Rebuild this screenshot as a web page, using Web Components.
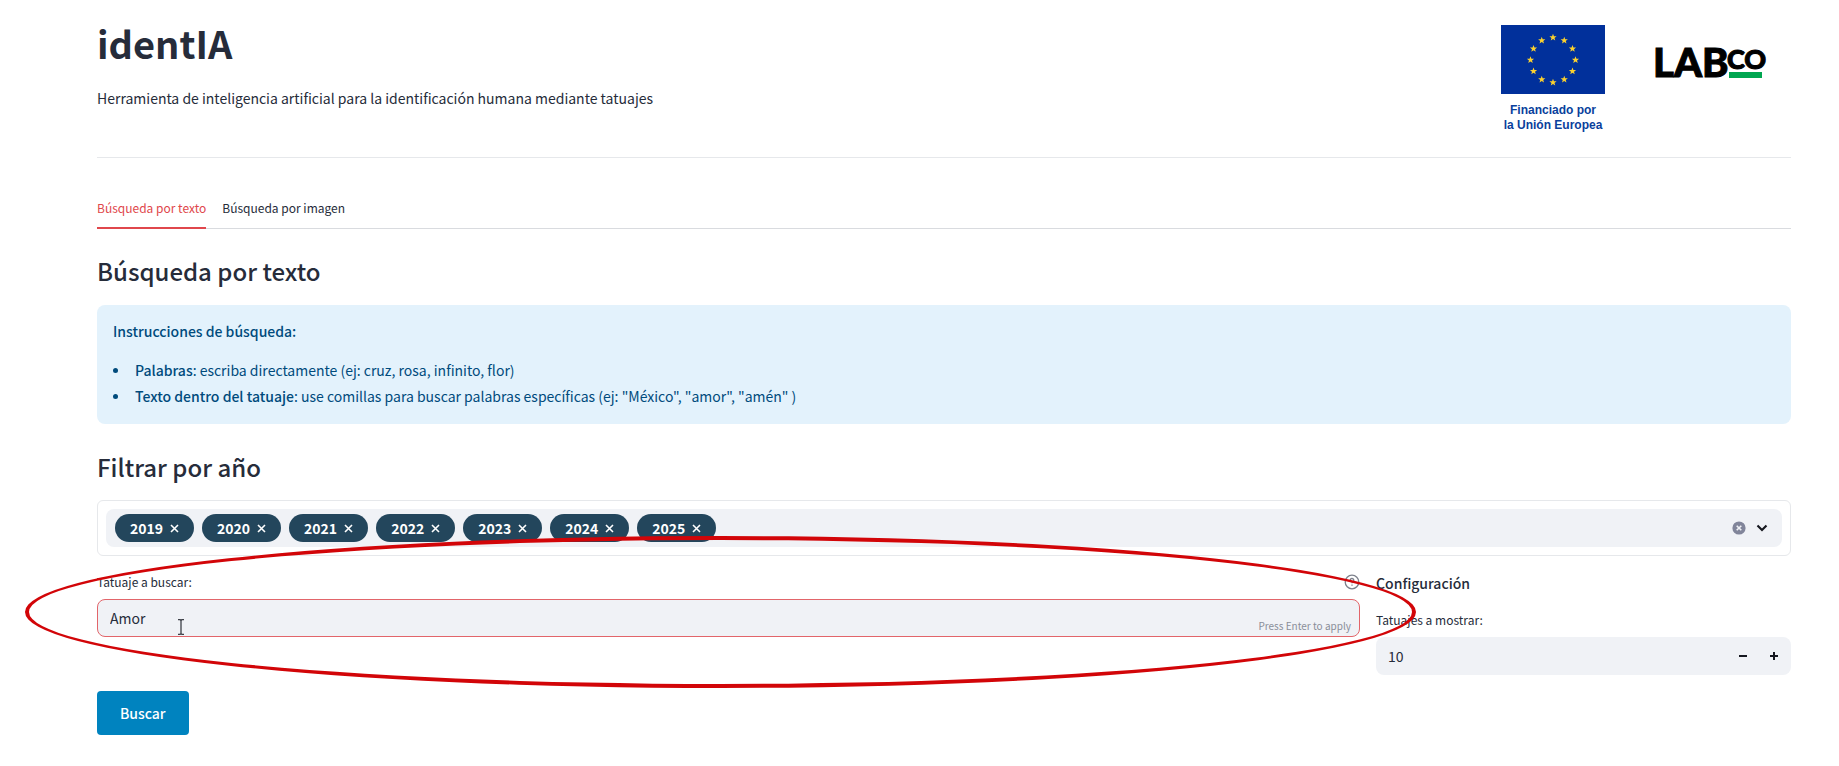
<!DOCTYPE html>
<html lang="es">
<head>
<meta charset="utf-8">
<title>identIA</title>
<style>
  html { background: #fff; }
  body {
    margin: 0;
    color: #262c3a;
    font: 14px/26px "Noto Sans CJK SC", "Noto Sans", sans-serif;
    --surface: #f0f2f6;
    --line: #e6e8eb;
    --accent: #e0474c;
    --chip: #23465c;
    --info-bg: #e3f2fc;
    --info-ink: #004b7c;
    --primary: #0083bf;
  }
</style>
</head>
<body>
<identia-app></identia-app>

<script>
const define = (name, html, setup) => {
  const template = document.createElement('template');
  template.innerHTML = `<style>
    :host { display: block; }
    *, *::before, *::after { box-sizing: border-box; }
    button, input { font: inherit; color: inherit; margin: 0; }
    button { border: 0; background: none; padding: 0; cursor: pointer; }
    svg { display: block; }
  </style>` + html;
  customElements.define(name, class extends HTMLElement {
    constructor() {
      super();
      this.attachShadow({ mode: 'open' }).append(template.content.cloneNode(true));
    }
    connectedCallback() { if (setup) setup(this, this.shadowRoot); }
  });
};

define('eu-emblem', `
  <style>
    :host { width: 104px; color: #0a3f9c; font: bold 12px/15px "Liberation Sans", sans-serif; text-align: center; white-space: nowrap; }
    svg { margin-bottom: 9px; }
    div { display: flex; flex-direction: column; align-items: center; }
  </style>
  <svg width="104" height="69" viewBox="0 0 104 69" aria-hidden="true">
    <rect width="104" height="69" fill="#01309b"/>
    <g id="stars" fill="#fbd12e"></g>
  </svg>
  <div><span>Financiado por</span><span>la Unión Europea</span></div>
`, (host, root) => {
  const group = root.getElementById('stars');
  group.innerHTML = Array.from({ length: 12 }, (_, i) => {
    const a = i * Math.PI / 6, cx = 52 + 22.5 * Math.sin(a), cy = 35 - 22.5 * Math.cos(a);
    const points = Array.from({ length: 10 }, (_, k) => {
      const r = k % 2 ? 1.6 : 3.8, b = k * Math.PI / 5;
      return (cx + r * Math.sin(b)).toFixed(2) + ',' + (cy - r * Math.cos(b)).toFixed(2);
    });
    return `<polygon points="${points.join(' ')}"/>`;
  }).join('');
});

define('labco-logo', `
  <style>
    text { font-family: Lato, Inter, sans-serif; font-weight: 900; fill: #000; stroke: #000; stroke-width: 1; }
  </style>
  <svg width="120" height="56" viewBox="0 -14 120 56" role="img" aria-label="LABCO">
    <text x="0" y="30" font-size="40">LAB</text>
    <text x="74" y="22" font-size="27">CO</text>
    <rect x="76" y="25" width="33" height="6" fill="#00a650"/>
  </svg>
`);

define('page-header', `
  <style>
    :host { padding-bottom: 25px; border-bottom: 1px solid var(--line); }
    header { display: flex; justify-content: space-between; align-items: flex-start; }
    h1 { margin: 0 0 20px; font-size: 38px; line-height: 44px; font-weight: 700; }
    p { margin: 0; }
    .logos { display: flex; gap: 48px; padding: 4px 18px 0 0; }
    labco-logo { margin-top: 8px; }
    eu-emblem { margin-bottom: -1px; }
  </style>
  <header>
    <div><h1><slot name="title"></slot></h1><p><slot></slot></p></div>
    <div class="logos"><eu-emblem></eu-emblem><labco-logo></labco-logo></div>
  </header>
`);

define('tab-bar', `
  <style>
    :host { border-bottom: 1px solid #d9dbdf; }
    div { display: flex; gap: 16px; margin-bottom: -1px; }
    button { height: 42px; font-size: 12px; line-height: 38px; padding-top: 2px; border-bottom: 2px solid transparent; }
    button[aria-selected=true] { color: var(--accent); border-color: var(--accent); }
  </style>
  <div role="tablist">
    <button role="tab" aria-selected="true">Búsqueda por texto</button>
    <button role="tab" aria-selected="false">Búsqueda por imagen</button>
  </div>
`);

define('section-title', `
  <style>h2 { margin: 0; font-size: 24px; line-height: 32px; font-weight: 500; }</style>
  <h2><slot></slot></h2>
`);

define('info-box', `
  <style>
    :host { padding: 13px 16px 15px; border-radius: 8px; background: var(--info-bg); color: var(--info-ink); }
    p { margin: 0 0 13px; font-weight: 500; }
    ul { margin: 0; padding-left: 22px; list-style: none; }
    li::before { content: ""; display: inline-block; width: 5px; height: 5px; margin: 0 17px 0 -22px; border-radius: 50%; background: currentColor; vertical-align: 3px; }
    b { font-weight: 500; }
  </style>
  <p>Instrucciones de búsqueda:</p>
  <ul>
    <li><b>Palabras</b>: escriba directamente (ej: cruz, rosa, infinito, flor)</li>
    <li><b>Texto dentro del tatuaje</b>: use comillas para buscar palabras específicas (ej: "México", "amor", "amén" )</li>
  </ul>
`);

define('year-chip', `
  <style>
    :host { display: flex; align-items: center; gap: 7px; height: 28px; padding: 0 15px; border-radius: 14px; background: var(--chip); color: #fff; font-weight: 700; }
    button { display: flex; }
  </style>
  <slot></slot>
  <button aria-label="Quitar"><svg width="9" height="9" viewBox="0 0 9 9"><path d="M1 1l7 7M8 1l-7 7" stroke="#fff" stroke-width="1.6"/></svg></button>
`);

define('year-select', `
  <style>
    :host { padding: 8px; border: 1px solid var(--line); border-radius: 6px; }
    .field { display: flex; align-items: center; gap: 8px; height: 38px; padding: 0 14px 0 9px; border-radius: 8px; background: var(--surface); }
    input { flex: 1; min-width: 0; border: 0; outline: 0; background: none; }
    .tools { display: flex; align-items: center; gap: 10px; }
  </style>
  <div class="field">
    <slot></slot>
    <input type="text" aria-label="Filtrar por año">
    <div class="tools">
      <button aria-label="Borrar todo"><svg width="14" height="14" viewBox="0 0 14 14"><circle cx="7" cy="7" r="6.6" fill="#81859a"/><path d="M4.7 4.7l4.6 4.6M9.3 4.7l-4.6 4.6" stroke="#f0f2f6" stroke-width="1.6"/></svg></button>
      <button aria-label="Abrir lista"><svg width="12" height="14" viewBox="0 0 12 14"><path d="M1.5 4.5l4.5 4.6 4.5-4.6" fill="none" stroke="#15171f" stroke-width="2.1"/></svg></button>
    </div>
  </div>
`);

define('tattoo-field', `
  <style>
    .top { display: flex; justify-content: space-between; align-items: center; height: 20px; margin-bottom: 7px; }
    label { font-size: 12px; line-height: 20px; }
    .box { display: flex; height: 38px; padding: 0 8px 0 12px; border: 1px solid #e2656a; border-radius: 8px; background: var(--surface); }
    input { flex: 1; min-width: 0; padding: 0; border: 0; outline: 0; background: none; }
    small { align-self: flex-end; color: #8a8e99; font-size: 10px; line-height: 20px; }
  </style>
  <div class="top">
    <label for="query">Tatuaje a buscar:</label>
    <button aria-label="Ayuda"><svg width="16" height="16" viewBox="0 0 16 16" fill="none" stroke="#7d818c" stroke-width="1.3"><circle cx="8" cy="8" r="6.8"/><path d="M6.2 6.3a1.8 1.8 0 1 1 2.6 1.6c-.6.3-.8.6-.8 1.3M8 10.6v1.2"/></svg></button>
  </div>
  <div class="box"><input id="query" type="text" value="Amor"><small>Press Enter to apply</small></div>
`);

define('result-count', `
  <style>
    h3 { margin: 0 0 16px; font-size: 14px; line-height: 22px; font-weight: 500; }
    label { display: block; margin-bottom: 7px; font-size: 12px; line-height: 20px; }
    .box { display: flex; align-items: center; height: 38px; padding: 0 2px 0 12px; border-radius: 8px; background: var(--surface); }
    input { flex: 1; min-width: 0; padding: 0; border: 0; outline: 0; background: none; appearance: textfield; }
    input::-webkit-inner-spin-button { display: none; }
    .box button { display: grid; place-items: center; width: 31px; height: 38px; }
  </style>
  <h3>Configuración</h3>
  <label for="count">Tatuajes a mostrar:</label>
  <div class="box">
    <input id="count" type="number" value="10">
    <button aria-label="Menos"><svg width="10" height="10" viewBox="0 0 10 10"><path d="M1 5h8" stroke="#15171f" stroke-width="2"/></svg></button>
    <button aria-label="Más"><svg width="10" height="10" viewBox="0 0 10 10"><path d="M1 5h8M5 1v8" stroke="#15171f" stroke-width="2"/></svg></button>
  </div>
`);

define('search-button', `
  <style>
    button { height: 44px; padding: 0 23px; border-radius: 4px; background: var(--primary); color: #fff; font-weight: 500; }
  </style>
  <button type="submit"><slot></slot></button>
`);

define('search-panel', `
  <style>
    :host { position: relative; }
    .grid { display: grid; grid-template-columns: minmax(0, 1fr) 415px; gap: 16px; }
    search-button { margin-top: 16px; }
    .ring { position: absolute; left: -72px; right: 375px; top: -36px; height: 152px; border: 4px solid #d20508; border-radius: 50%; pointer-events: none; }
    .pointer { position: absolute; left: 80px; top: 47px; pointer-events: none; }
  </style>
  <div class="grid">
    <tattoo-field></tattoo-field>
    <result-count></result-count>
  </div>
  <search-button>Buscar</search-button>
  <svg class="pointer" width="8" height="16" viewBox="0 0 8 16" aria-hidden="true"><path d="M1 .7h2.2L4 1.5l.8-.8H7M1 15.3h2.2l.8-.8.8.8H7M4 1.5v13" fill="none" stroke="#3d4048" stroke-width="1.3"/></svg>
  <div class="ring"></div>
`);

define('identia-app', `
  <style>
    main { padding: 21px 48px 30px 97px; }
    tab-bar { margin: 29px 0 26px; }
    info-box { margin: 18px 0 27px; }
    year-select { margin: 17px 0 16px; }
  </style>
  <main>
    <page-header><span slot="title">identIA</span>Herramienta de inteligencia artificial para la identificación humana mediante tatuajes</page-header>
    <tab-bar></tab-bar>
    <section-title>Búsqueda por texto</section-title>
    <info-box></info-box>
    <section-title>Filtrar por año</section-title>
    <year-select>
      <year-chip>2019</year-chip><year-chip>2020</year-chip><year-chip>2021</year-chip><year-chip>2022</year-chip><year-chip>2023</year-chip><year-chip>2024</year-chip><year-chip>2025</year-chip>
    </year-select>
    <search-panel></search-panel>
  </main>
`);
</script>
</body>
</html>
